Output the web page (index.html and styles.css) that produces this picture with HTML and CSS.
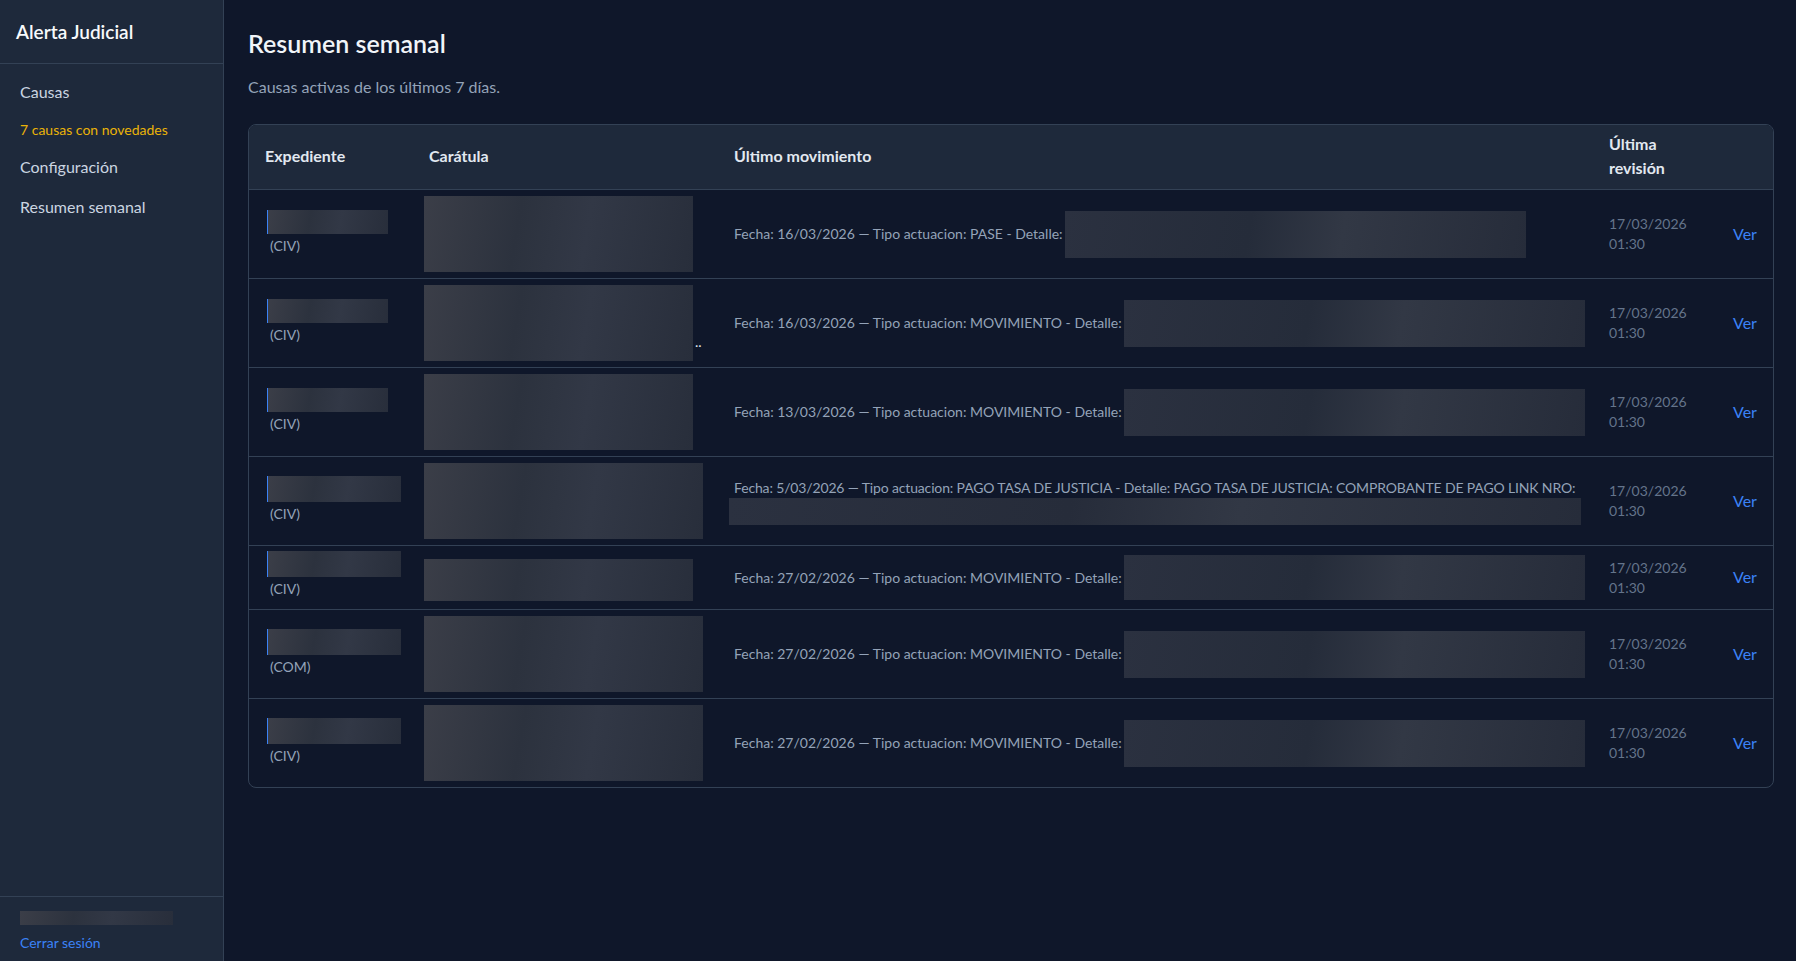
FILE: index.html
```html
<!DOCTYPE html>
<html lang="es">
<head>
<meta charset="utf-8">
<title>Alerta Judicial - Resumen semanal</title>
<link rel="stylesheet" href="styles.css">
</head>
<body>
<div class="app">
  <aside class="sidebar">
    <div class="brand">Alerta Judicial</div>
    <nav class="nav">
      <a class="nav-link" href="#">Causas</a>
      <span class="nav-note">7 causas con novedades</span>
      <a class="nav-link" href="#">Configuración</a>
      <a class="nav-link" href="#">Resumen semanal</a>
    </nav>
    <div class="sidebar-footer">
      <div class="redact redact-user"></div>
      <a class="logout" href="#">Cerrar sesión</a>
    </div>
  </aside>
  <main class="main">
    <h1 class="title">Resumen semanal</h1>
    <p class="subtitle">Causas activas de los últimos 7 días.</p>
    <div class="card">
      <table class="table">
        <colgroup>
          <col class="c-exp"><col class="c-car"><col class="c-mov"><col class="c-rev"><col class="c-ver">
        </colgroup>
        <thead>
          <tr>
            <th>Expediente</th>
            <th>Carátula</th>
            <th>Último movimiento</th>
            <th>Última revisión</th>
            <th></th>
          </tr>
        </thead>
        <tbody>
          <tr>
            <td><div class="redact exp-box"></div><div class="fuero">(CIV)</div></td>
            <td><div class="redact car-box"></div></td>
            <td><div class="mov"><span>Fecha: 16/03/2026 — Tipo actuacion: PASE - Detalle:</span><div class="redact det-box"></div></div></td>
            <td class="rev">17/03/2026<br>01:30</td>
            <td><a class="ver" href="#">Ver</a></td>
          </tr>
          <tr>
            <td><div class="redact exp-box"></div><div class="fuero">(CIV)</div></td>
            <td><div class="car-wrap"><div class="redact car-box"></div><span class="dots">..</span></div></td>
            <td><div class="mov"><span>Fecha: 16/03/2026 — Tipo actuacion: MOVIMIENTO - Detalle:</span><div class="redact det-box"></div></div></td>
            <td class="rev">17/03/2026<br>01:30</td>
            <td><a class="ver" href="#">Ver</a></td>
          </tr>
          <tr>
            <td><div class="redact exp-box"></div><div class="fuero">(CIV)</div></td>
            <td><div class="redact car-box"></div></td>
            <td><div class="mov"><span>Fecha: 13/03/2026 — Tipo actuacion: MOVIMIENTO - Detalle:</span><div class="redact det-box"></div></div></td>
            <td class="rev">17/03/2026<br>01:30</td>
            <td><a class="ver" href="#">Ver</a></td>
          </tr>
          <tr>
            <td><div class="redact exp-box wide"></div><div class="fuero">(CIV)</div></td>
            <td><div class="redact car-box wide"></div></td>
            <td><div class="mov-line">Fecha: 5/03/2026 — Tipo actuacion: PAGO TASA DE JUSTICIA - Detalle: PAGO TASA DE JUSTICIA: COMPROBANTE DE PAGO LINK NRO:</div><div class="redact det-line"></div></td>
            <td class="rev">17/03/2026<br>01:30</td>
            <td><a class="ver" href="#">Ver</a></td>
          </tr>
          <tr class="row-short">
            <td><div class="redact exp-box wide tight"></div><div class="fuero">(CIV)</div></td>
            <td><div class="redact car-box short"></div></td>
            <td><div class="mov"><span>Fecha: 27/02/2026 — Tipo actuacion: MOVIMIENTO - Detalle:</span><div class="redact det-box short"></div></div></td>
            <td class="rev">17/03/2026<br>01:30</td>
            <td><a class="ver" href="#">Ver</a></td>
          </tr>
          <tr>
            <td><div class="redact exp-box wide"></div><div class="fuero">(COM)</div></td>
            <td><div class="redact car-box wide"></div></td>
            <td><div class="mov"><span>Fecha: 27/02/2026 — Tipo actuacion: MOVIMIENTO - Detalle:</span><div class="redact det-box"></div></div></td>
            <td class="rev">17/03/2026<br>01:30</td>
            <td><a class="ver" href="#">Ver</a></td>
          </tr>
          <tr>
            <td><div class="redact exp-box wide"></div><div class="fuero">(CIV)</div></td>
            <td><div class="redact car-box wide"></div></td>
            <td><div class="mov"><span>Fecha: 27/02/2026 — Tipo actuacion: MOVIMIENTO - Detalle:</span><div class="redact det-box"></div></div></td>
            <td class="rev">17/03/2026<br>01:30</td>
            <td><a class="ver" href="#">Ver</a></td>
          </tr>
        </tbody>
      </table>
    </div>
  </main>
</div>
</body>
</html>
```

FILE: styles.css
```css
* { box-sizing: border-box; }

html, body {
  margin: 0;
  height: 100%;
  background: #0f172a;
  font-family: Lato, "Noto Sans", "Liberation Sans", sans-serif;
  color: #e2e8f0;
}

.app {
  display: flex;
  height: 961px;
}

.sidebar {
  width: 224px;
  flex: 0 0 224px;
  background: #1e293b;
  border-right: 1px solid #334155;
  display: flex;
  flex-direction: column;
}

.brand {
  height: 64px;
  padding: 20px 16px 0;
  font-size: 19px;
  font-weight: 600;
  color: #f8fafc;
  line-height: 24px;
  border-bottom: 1px solid #334155;
}

.nav {
  display: flex;
  flex-direction: column;
  padding: 16px 20px 0;
}

.nav-link {
  color: #cbd5e1;
  text-decoration: none;
  font-size: 16px;
  line-height: 24px;
}

.nav-note {
  color: #eab308;
  font-size: 14px;
  line-height: 20px;
  margin: 16px 0 15px;
}
.nav-note + .nav-link + .nav-link { margin-top: 16px; }

.sidebar-footer {
  margin-top: auto;
  border-top: 1px solid #334155;
  padding: 14px 20px 8px;
  display: flex;
  flex-direction: column;
  gap: 8px;
}

.redact-user {
  width: 153px;
  height: 14px;
  background: linear-gradient(90deg, #3a3e4a 0%, #2f3442 40%, #2b3140 100%);
}

.logout {
  color: #3b82f6;
  font-size: 14px;
  line-height: 20px;
  text-decoration: none;
}

.main {
  flex: 1;
  padding: 25px 22px 24px 24px;
}

.title {
  margin: 0;
  font-size: 25px;
  line-height: 36px;
  font-weight: 600;
  color: #f1f5f9;
}

.subtitle {
  margin: 14px 0 25px;
  font-size: 16px;
  line-height: 24px;
  color: #94a3b8;
}

.card {
  border: 1px solid #334155;
  border-radius: 8px;
  overflow: hidden;
}

.table {
  width: 100%;
  border-collapse: collapse;
  table-layout: fixed;
}

.c-exp { width: 164px; }
.c-car { width: 305px; }
.c-mov { width: 875px; }
.c-rev { width: 124px; }

.table th {
  background: #1e293b;
  text-align: left;
  font-size: 16px;
  font-weight: 700;
  line-height: 24px;
  color: #e2e8f0;
  padding: 7px 16px 9px;
  border-bottom: 1px solid #334155;
  height: 64px;
}

.table td {
  padding: 6px 16px;
  vertical-align: middle;
  border-top: 1px solid #334155;
  font-size: 14px;
  line-height: 20px;
  color: #94a3b8;
}

.table tbody tr:first-child td { border-top: none; }
.table .row-short td { height: 64px; }

.redact {
  background: linear-gradient(100deg, #3b3e48 0%, #2c323e 35%, #323846 60%, #282e3b 100%);
}

.exp-box {
  width: 121px;
  height: 24px;
  margin: -2px 0 0 2px;
  border-left: 1px solid #3b82f6;
}
.exp-box.wide { width: 134px; height: 26px; }
.exp-box.tight { margin-top: -6px; }

.fuero {
  margin-top: 2px;
  padding-left: 5px;
  color: #94a3b8;
}

.car-wrap { display: flex; align-items: flex-end; }
.car-box {
  width: 269px;
  height: 76px;
  margin-left: -5px;
}
.car-box.wide { width: 279px; }
.car-box.short { height: 42px; width: 269px; margin-top: 4px; }
.dots { color: #e2e8f0; margin-left: 2px; line-height: 38px; }

.mov {
  display: flex;
  align-items: center;
  gap: 2px;
  white-space: nowrap;
}

.det-box {
  flex: 0 0 461px;
  width: 461px;
  height: 47px;
  background: linear-gradient(100deg, #2b3140 0%, #252c3a 40%, #323845 60%, #262c3a 100%);
}
.det-box.short { height: 45px; }

.mov-line { white-space: nowrap; letter-spacing: -0.15px; }
.det-line {
  width: 852px;
  height: 27px;
  margin-left: -5px;
  background: linear-gradient(100deg, #2b3140 0%, #262c3a 40%, #323845 60%, #262c3a 100%);
}

.rev { color: #64748b !important; }

.ver {
  color: #3b82f6;
  font-size: 16px;
  text-decoration: none;
}
```
